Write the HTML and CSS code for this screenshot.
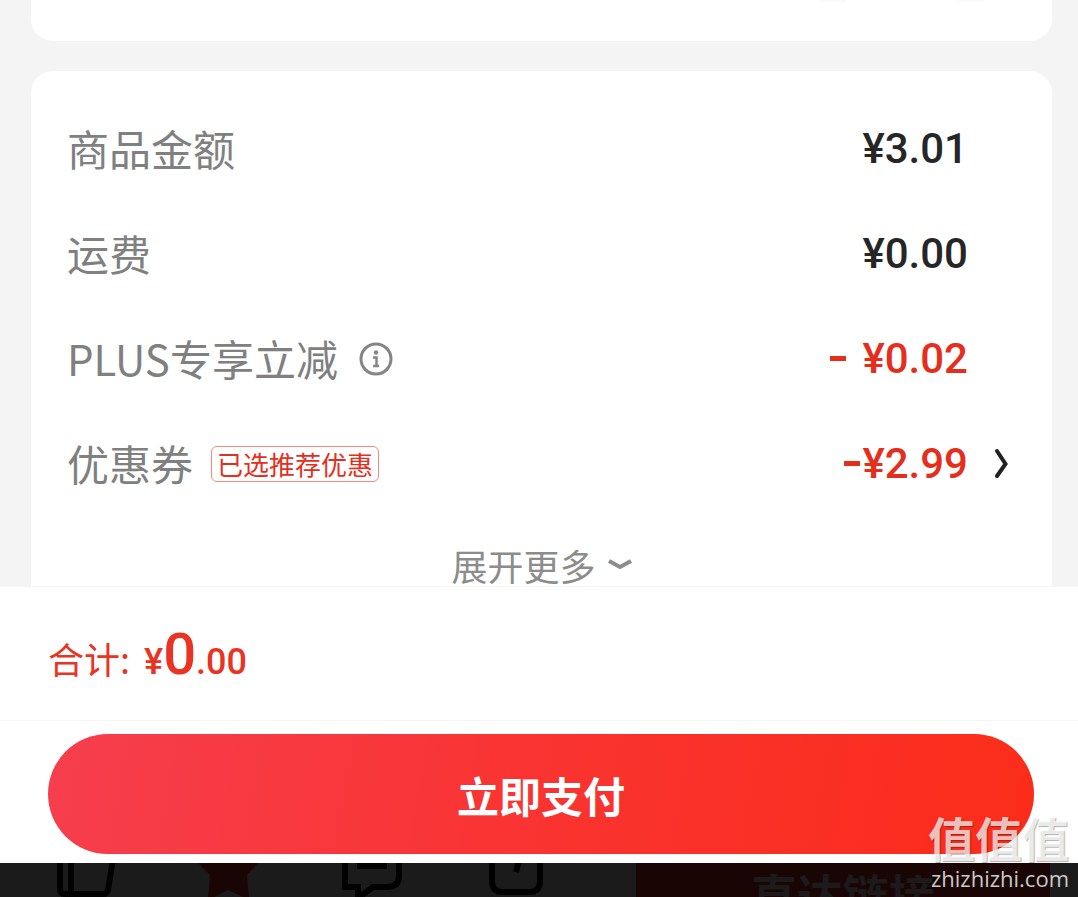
FILE: index.html
```html
<!DOCTYPE html>
<html lang="zh-CN">
<head>
    <meta charset="UTF-8">
    <meta name="viewport" content="width=device-width, initial-scale=1.0">
    <title>确认订单</title>
    <link rel="stylesheet" href="styles.css">
</head>
<body>
    <div class="page">
        <main class="content">
            <section class="card card-top">
                <span class="trace"></span>
                <span class="trace"></span>
            </section>

            <section class="card card-price">
                <div class="row">
                    <span class="label">商品金额</span>
                    <span class="price">¥3.01</span>
                </div>
                <div class="row">
                    <span class="label">运费</span>
                    <span class="price">¥0.00</span>
                </div>
                <div class="row">
                    <span class="label">PLUS专享立减</span>
                    <button type="button" class="info" aria-label="说明">
                        <svg width="36" height="36" viewBox="0 0 36 36" fill="none" stroke="#858585">
                            <circle cx="18" cy="18" r="15" stroke-width="3"/>
                            <circle cx="18" cy="11.5" r="2.2" fill="#858585" stroke="none"/>
                            <path d="M15 16.5h3.500V25M15 25h6" stroke-width="2.5"/>
                        </svg>
                    </button>
                    <span class="price discount"><span class="minus"></span>¥0.02</span>
                </div>
                <div class="row">
                    <span class="label">优惠券</span>
                    <span class="tag">已选推荐优惠</span>
                    <span class="price discount"><span class="minus minus-tight"></span>¥2.99</span>
                    <button type="button" class="arrow" aria-label="选择优惠券">
                        <svg width="16" height="32" viewBox="0 0 16 32" fill="none" stroke="#222" stroke-width="4" stroke-linecap="round">
                            <path d="M3 3L11.5 16L3 28"/>
                        </svg>
                    </button>
                </div>
                <button type="button" class="more">
                    展开更多
                    <svg width="24" height="14" viewBox="0 0 24 14" fill="none" stroke="#8c8c8c" stroke-width="4">
                        <path d="M1 3L12 9L23 3"/>
                    </svg>
                </button>
            </section>
        </main>

        <footer class="checkout">
            <div class="total">
                <span class="total-label">合计:</span>
                <span class="total-price">¥<strong>0</strong>.00</span>
            </div>
            <div class="pay">
                <button type="button" class="pay-button">立即支付</button>
            </div>
        </footer>

        <!-- dimmed toolbar of the page below -->
        <div class="toolbar">
            <svg class="icons" width="636" height="34" viewBox="0 0 636 34" fill="none" stroke="#020202" stroke-width="6">
                <path d="M60 -4V26Q60 31 65 31H103Q107 31 108 27L113 -4M71 -4V31"/>
                <path d="M198 0H258L247 12L249 34H243L228 27L214 34H208L210 12Z" fill="#190604" stroke="none"/>
                <path d="M345 -4V24H358V35L373 24H387Q399 24 399 13V-4M357 3H387"/>
                <path d="M492 -4V18Q492 29 503 29H529Q540 29 540 18V-4M519 -2L516 9"/>
            </svg>
            <div class="link">直达链接</div>
        </div>

        <div class="watermark">
            <span class="mark-name">值值值</span>
            <span class="mark-url">zhizhizhi.com</span>
        </div>
    </div>
</body>
</html>
```
FILE: styles.css
```css
* {
    box-sizing: border-box;
}

body {
    margin: 0;
    background-color: #f4f4f4;
    font-family: "Noto Sans CJK SC", sans-serif;
}

button {
    padding: 0;
    border: none;
    background: none;
    font-family: inherit;
    cursor: pointer;
}

svg {
    display: block;
}

.page {
    position: relative;
    display: flex;
    flex-direction: column;
    height: 100vh;
    overflow: hidden;
}

.content {
    flex: 1;
    min-height: 0;
    overflow: hidden;
    padding: 0 26px 0 31px;
}

.card {
    background-color: white;
    border-radius: 22px;
}

.card-top {
    display: flex;
    justify-content: flex-end;
    gap: 112px;
    height: 41px;
    padding-right: 68px;
    border-radius: 0 0 22px 22px;
}

.trace {
    width: 26px;
    height: 2px;
    background-color: #fafafa;
}

.card-price {
    margin-top: 30px;
    padding: 25px 36px 30px;
}

.row {
    display: flex;
    align-items: center;
    height: 105px;
    padding-right: 48px;
    position: relative;
}

.label {
    padding-bottom: 2px;
    color: #808080;
    font-size: 42px;
    line-height: 60px;
}

.info {
    margin-left: 20px;
}

.price {
    display: flex;
    align-items: center;
    margin-left: auto;
    color: #262626;
    font-family: Roboto, sans-serif;
    font-size: 42px;
    font-weight: 500;
    line-height: 50px;
}

.discount {
    color: #e52e1c;
}

.minus {
    width: 16px;
    height: 5px;
    margin-right: 16px;
    background-color: #e52e1c;
}

.minus-tight {
    margin-right: 2px;
}

.tag {
    margin-left: 18px;
    padding: 0 5px;
    border: 1px solid #f08a80;
    border-radius: 6px;
    color: #e52e1c;
    font-size: 26px;
    line-height: 34px;
}

.arrow {
    position: absolute;
    right: 6px;
}

.more {
    display: flex;
    align-items: center;
    gap: 12px;
    margin: 24px auto 0;
    color: #8c8c8c;
    font-size: 36px;
    line-height: 50px;
}

.checkout {
    border-top: 1px solid #f5f5f5;
    background-color: white;
}

.total {
    display: flex;
    align-items: baseline;
    gap: 14px;
    height: 134px;
    padding: 37px 48px 0;
    border-bottom: 1px solid #f5f5f5;
    color: #e93323;
}

.total-label {
    font-size: 36px;
    line-height: 60px;
}

.total-price {
    font-family: Roboto, sans-serif;
    font-size: 36px;
    font-weight: 500;
    line-height: 60px;
}

.total-price strong {
    font-size: 58px;
    font-weight: 500;
}

.pay {
    padding: 13px 44px 9px 48px;
}

.pay-button {
    width: 100%;
    height: 120px;
    border-radius: 60px;
    background: linear-gradient(100deg, #f63e4e, #f93433 45%, #fb2c19);
    color: white;
    font-size: 42px;
    font-weight: 700;
}

.toolbar {
    display: flex;
    height: 34px;
    padding-right: 28px;
    overflow: hidden;
    background-color: #1b1b1b;
}

.icons {
    flex: none;
}

.link {
    flex: 1;
    background-color: #190604;
    color: #1c1a1b;
    font-size: 46px;
    font-weight: 700;
    line-height: 60px;
    text-align: center;
}

.watermark {
    position: absolute;
    right: 9px;
    bottom: 4px;
    display: flex;
    flex-direction: column;
    align-items: flex-end;
}

.mark-name {
    color: rgba(255, 255, 255, 0.72);
    font-size: 47px;
    font-weight: 700;
    line-height: 52px;
    text-shadow: 1px 1px 1px rgba(0, 0, 0, 0.3);
}

.mark-url {
    color: #c9c9c9;
    font-family: "Open Sans", sans-serif;
    font-size: 22px;
    font-weight: 500;
    line-height: 30px;
}
```
